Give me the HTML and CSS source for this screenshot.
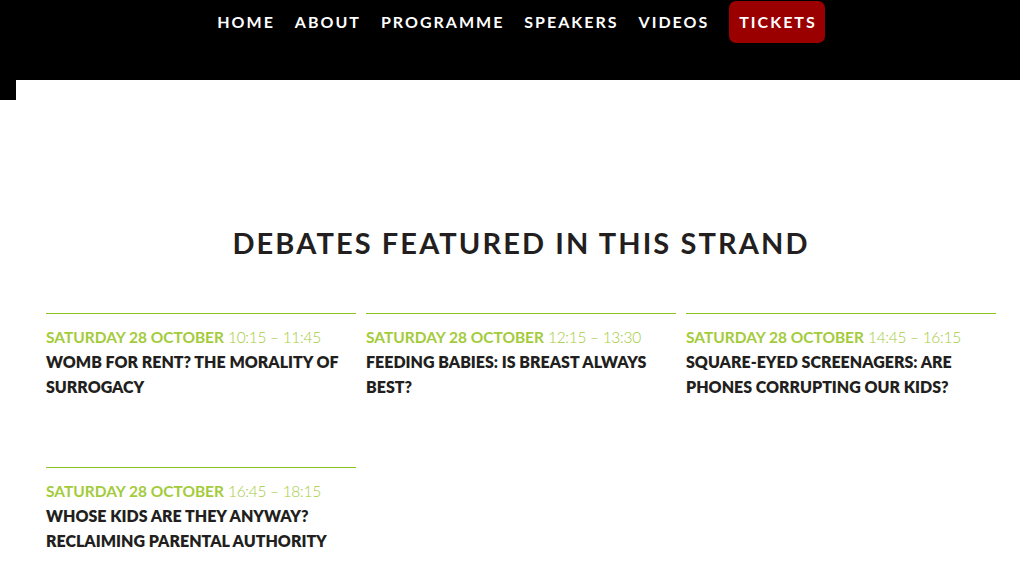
FILE: index.html
```html
<!DOCTYPE html>
<html>
<head>
<meta charset="utf-8">
<link rel="stylesheet" href="styles.css">
</head>
<body>
<header class="site-header">
  <nav class="nav">
    <a class="nav-link" href="#">HOME</a>
    <a class="nav-link" href="#">ABOUT</a>
    <a class="nav-link" href="#">PROGRAMME</a>
    <a class="nav-link" href="#">SPEAKERS</a>
    <a class="nav-link" href="#">VIDEOS</a>
    <a class="nav-link tickets" href="#">TICKETS</a>
  </nav>
</header>
<div class="corner"></div>
<main class="content">
  <h2 class="strand-title">DEBATES FEATURED IN THIS STRAND</h2>
  <div class="debates">
    <article class="debate">
      <p class="when"><span class="date">SATURDAY 28 OCTOBER</span> <span class="time">10:15 – 11:45</span></p>
      <h3 class="debate-title">WOMB FOR RENT? THE MORALITY OF SURROGACY</h3>
    </article>
    <article class="debate">
      <p class="when"><span class="date">SATURDAY 28 OCTOBER</span> <span class="time">12:15 – 13:30</span></p>
      <h3 class="debate-title">FEEDING BABIES: IS BREAST ALWAYS BEST?</h3>
    </article>
    <article class="debate">
      <p class="when"><span class="date">SATURDAY 28 OCTOBER</span> <span class="time">14:45 – 16:15</span></p>
      <h3 class="debate-title">SQUARE-EYED SCREENAGERS: ARE PHONES CORRUPTING OUR KIDS?</h3>
    </article>
    <article class="debate">
      <p class="when"><span class="date">SATURDAY 28 OCTOBER</span> <span class="time">16:45 – 18:15</span></p>
      <h3 class="debate-title">WHOSE KIDS ARE THEY ANYWAY? RECLAIMING PARENTAL AUTHORITY</h3>
    </article>
  </div>
</main>
</body>
</html>
```
FILE: styles.css
```css
* { box-sizing: border-box; }
html, body { margin: 0; padding: 0; background: #fff; }
body { font-family: "Lato", "Liberation Sans", sans-serif; color: #231f20; }

.site-header {
  height: 80px;
  background: #000;
  display: flex;
  justify-content: center;
  align-items: flex-start;
  padding-left: 22px;
}
.nav {
  display: flex;
  align-items: center;
  gap: 20px;
  padding-top: 1px;
}
.nav-link {
  color: #fff;
  text-decoration: none;
  font-weight: 700;
  font-size: 16px;
  letter-spacing: 2px;
  line-height: 42px;
}
.nav-link.tickets {
  background: #9b0000;
  border-radius: 7px;
  padding: 0 8px 0 10px;
}

.corner { width: 16px; height: 20px; background: #000; }

.content { padding: 119px 24px 40px 46px; }

.strand-title {
  margin: 0;
  text-align: center;
  font-size: 29px;
  font-weight: 700;
  letter-spacing: 2.1px;
  line-height: 48px;
  color: #231f20;
}

.debates {
  margin-top: 46px;
  display: grid;
  grid-template-columns: repeat(3, 310px);
  column-gap: 10px;
  row-gap: 0;
}
.debate {
  border-top: 1px solid #8cc320;
  padding-top: 11px;
  height: 154px;
}
.when {
  margin: 0;
  font-size: 15.5px;
  line-height: 24px;
  color: #a3cb3b;
}
.date { font-weight: 700; }
.time { font-weight: 300; letter-spacing: -0.3px; }
.debate-title {
  margin: 0;
  font-size: 16px;
  font-weight: 800;
  line-height: 25px;
  color: #231f20;
}
```
